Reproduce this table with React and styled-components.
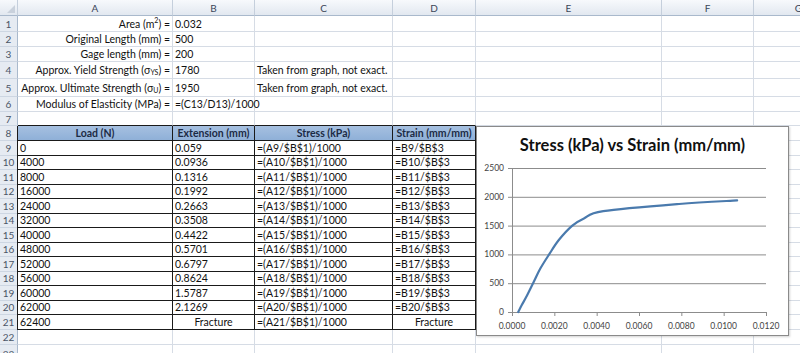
import React from "react";
import styled, { createGlobalStyle } from "styled-components";

const GlobalStyle = createGlobalStyle`
  html, body { margin: 0; padding: 0; background: #fff; }
  body { width: 800px; height: 353px; overflow: hidden; font-family: Lato, "Open Sans", sans-serif; }
`;

const COLS = [18, 155, 82, 138, 83, 186, 92, 90];
const ROWS = [16, 16, 15, 15, 17, 18, 15, 14, 15, ...Array(13).fill(14.5), 15, 20];

const Sheet = styled.div`
  position: relative;
  display: grid;
  grid-template-columns: ${COLS.map((c) => c + "px").join(" ")};
  grid-template-rows: ${ROWS.map((r) => r + "px").join(" ")};
  width: ${COLS.reduce((a, b) => a + b, 0)}px;
  font-size: 10.5px;
  color: #111;
`;

const ColHead = styled.div`
  box-sizing: border-box;
  display: flex;
  align-items: center;
  justify-content: center;
  font-size: 10px;
  color: #3b4658;
  background: linear-gradient(#f7f9fc, #e2e8f0);
  border-right: 1px solid #c5cfdc;
  border-bottom: 1px solid #a9b9cc;
`;

const Corner = styled(ColHead)`
  position: relative;
  &::after {
    content: "";
    position: absolute;
    right: 2px;
    bottom: 2px;
    border-left: 8px solid transparent;
    border-bottom: 8px solid #c9d1dc;
  }
`;

const RowHead = styled.div`
  box-sizing: border-box;
  display: flex;
  align-items: center;
  justify-content: center;
  font-size: 10px;
  color: #4b5566;
  background: #e6ebf2;
  border-right: 1px solid #a9b9cc;
  border-bottom: 1px solid #cdd6e2;
`;

const Cell = styled.div`
  box-sizing: border-box;
  display: flex;
  align-items: center;
  justify-content: ${(p) => (p.$align === "right" ? "flex-end" : p.$align === "center" ? "center" : "flex-start")};
  padding: 0 2px;
  white-space: nowrap;
  overflow: visible;
  font-weight: ${(p) => (p.$bold ? 700 : 400)};
  color: ${(p) => (p.$head ? "#1c2b45" : "#111")};
  background: ${(p) => (p.$head ? "linear-gradient(#a6c0e0, #8fb0d8)" : "#fff")};
  border-right: 1px solid ${(p) => (p.$box ? "#1a1a1a" : "#d6dce5")};
  border-bottom: 1px solid ${(p) => (p.$box || p.$boxBelow ? "#1a1a1a" : "#d6dce5")};
  border-left: ${(p) => (p.$first ? "1px solid #1a1a1a" : "none")};
  margin-left: ${(p) => (p.$first ? "-1px" : "0")};
  position: relative;
  z-index: ${(p) => (p.$over ? 1 : 0)};
`;

const Sub = styled.span`
  font-size: 7px;
  position: relative;
  top: 2px;
`;

const Sup = styled.span`
  font-size: 7px;
  position: relative;
  top: -4px;
`;

/* ---------- chart ---------- */

const ChartBox = styled.div`
  position: absolute;
  left: 476px;
  top: 126px;
  width: 313px;
  height: 210px;
  box-sizing: border-box;
  background: #fff;
  border: 1px solid #8a8a8a;
  box-shadow: 1px 1px 2px rgba(0, 0, 0, 0.18);
  z-index: 5;
`;

const ChartTitle = styled.div`
  position: absolute;
  left: 0;
  right: 0;
  top: 8px;
  text-align: center;
  font-size: 16.5px;
  font-weight: 700;
  color: #111;
`;

const Plot = styled.svg`
  position: absolute;
  left: 0;
  top: 0;
`;

const loads = [0, 4000, 8000, 16000, 24000, 32000, 40000, 48000, 52000, 56000, 60000, 62000, 62400];
const ext = ["0.059", "0.0936", "0.1316", "0.1992", "0.2663", "0.3508", "0.4422", "0.5701", "0.6797", "0.8624", "1.5787", "2.1269", "Fracture"];

const X0 = 35, X1 = 289, Y0 = 185, YTOP = 41;
const px = (s) => X0 + (s / 0.012) * (X1 - X0);
const py = (v) => Y0 - (v / 2500) * (Y0 - YTOP);

function smoothPath(pts) {
  let d = `M${pts[0][0].toFixed(2)},${pts[0][1].toFixed(2)}`;
  for (let i = 0; i < pts.length - 1; i++) {
    const p0 = pts[i - 1] || pts[i];
    const p1 = pts[i];
    const p2 = pts[i + 1];
    const p3 = pts[i + 2] || p2;
    const t = 1 / 6;
    const c1 = [p1[0] + (p2[0] - p0[0]) * t, p1[1] + (p2[1] - p0[1]) * t];
    const c2 = [p2[0] - (p3[0] - p1[0]) * t, p2[1] - (p3[1] - p1[1]) * t];
    d += ` C${c1[0].toFixed(2)},${c1[1].toFixed(2)} ${c2[0].toFixed(2)},${c2[1].toFixed(2)} ${p2[0].toFixed(2)},${p2[1].toFixed(2)}`;
  }
  return d;
}

function Chart() {
  const pts = loads.slice(0, 12).map((l, i) => [px(parseFloat(ext[i]) / 200), py(l / 0.032 / 1000)]);
  const yTicks = [0, 500, 1000, 1500, 2000, 2500];
  const xTicks = [0, 0.002, 0.004, 0.006, 0.008, 0.01, 0.012];
  return (
    <ChartBox>
      <ChartTitle>Stress (kPa) vs Strain (mm/mm)</ChartTitle>
      <Plot width="311" height="208" viewBox="0 0 311 208">
        {yTicks.map((v) => (
          <g key={v}>
            <line x1={X0 - 4} x2={X1} y1={py(v) + 0.5} y2={py(v) + 0.5} stroke="#8c8c8c" strokeWidth="1" />
            <text x={X0 - 8} y={py(v) + 3} textAnchor="end" fontSize="8.5" fill="#444" fontFamily="Lato, sans-serif">
              {v}
            </text>
          </g>
        ))}
        <line x1={X0 + 0.5} x2={X0 + 0.5} y1={YTOP} y2={Y0 + 1} stroke="#8c8c8c" strokeWidth="1" />
        {xTicks.map((v) => (
          <g key={v}>
            <line x1={px(v) + 0.5} x2={px(v) + 0.5} y1={Y0} y2={Y0 + 4} stroke="#8c8c8c" strokeWidth="1" />
            <text x={px(v)} y={Y0 + 17} textAnchor="middle" fontSize="8.5" fill="#444" fontFamily="Lato, sans-serif">
              {v.toFixed(4)}
            </text>
          </g>
        ))}
        <path d={smoothPath(pts)} fill="none" stroke="#4a7aad" strokeWidth="2.2" strokeLinejoin="round" strokeLinecap="round" />
      </Plot>
    </ChartBox>
  );
}

/* ---------- sheet contents ---------- */

const letters = ["A", "B", "C", "D", "E", "F", "G"];

const topRows = [
  [<>Area (m<Sup>2</Sup>) = </>, "0.032"],
  ["Original Length (mm) = ", "500"],
  ["Gage length (mm) = ", "200"],
  [<>Approx. Yield Strength (σ<Sub>YS</Sub>) = </>, "1780", "Taken from graph, not exact."],
  [<>Approx. Ultimate Strength (σ<Sub>U</Sub>) = </>, "1950", "Taken from graph, not exact."],
  ["Modulus of Elasticity (MPa) =  ", "=(C13/D13)/1000"],
];

function EmptyTail({ from = 4 }) {
  return letters.slice(from).map((l) => <Cell key={l} />);
}

export default function App() {
  const rows = [];
  topRows.forEach(([a, b, c], i) => {
    const n = i + 1;
    rows.push(
      <React.Fragment key={n}>
        <RowHead>{n}</RowHead>
        <Cell $align="right">{a}</Cell>
        <Cell $over>{b}</Cell>
        <Cell>{c}</Cell>
        <Cell />
        <EmptyTail />
      </React.Fragment>
    );
  });
  rows.push(
    <React.Fragment key={7}>
      <RowHead>7</RowHead>
      <Cell $boxBelow />
      <Cell $boxBelow />
      <Cell $boxBelow />
      <Cell $boxBelow />
      <EmptyTail />
    </React.Fragment>
  );
  rows.push(
    <React.Fragment key={8}>
      <RowHead>8</RowHead>
      <Cell $first $box $head $bold $align="center">Load (N)</Cell>
      <Cell $box $head $bold $align="center">Extension (mm)</Cell>
      <Cell $box $head $bold $align="center">Stress (kPa)</Cell>
      <Cell $box $head $bold $align="center">Strain (mm/mm)</Cell>
      <EmptyTail />
    </React.Fragment>
  );
  loads.forEach((l, i) => {
    const n = i + 9;
    const last = i === loads.length - 1;
    rows.push(
      <React.Fragment key={n}>
        <RowHead>{n}</RowHead>
        <Cell $first $box>{l}</Cell>
        <Cell $box $align={last ? "center" : "left"}>{ext[i]}</Cell>
        <Cell $box>{`=(A${n}/$B$1)/1000`}</Cell>
        <Cell $box $align={last ? "center" : "left"}>{last ? "Fracture" : `=B${n}/$B$3`}</Cell>
        <EmptyTail />
      </React.Fragment>
    );
  });
  [22, 23].forEach((n) =>
    rows.push(
      <React.Fragment key={n}>
        <RowHead>{n}</RowHead>
        <EmptyTail from={0} />
      </React.Fragment>
    )
  );

  return (
    <>
      <GlobalStyle />
      <Sheet>
        <Corner />
        {letters.map((l) => (
          <ColHead key={l}>{l}</ColHead>
        ))}
        {rows}
        <Chart />
      </Sheet>
    </>
  );
}
